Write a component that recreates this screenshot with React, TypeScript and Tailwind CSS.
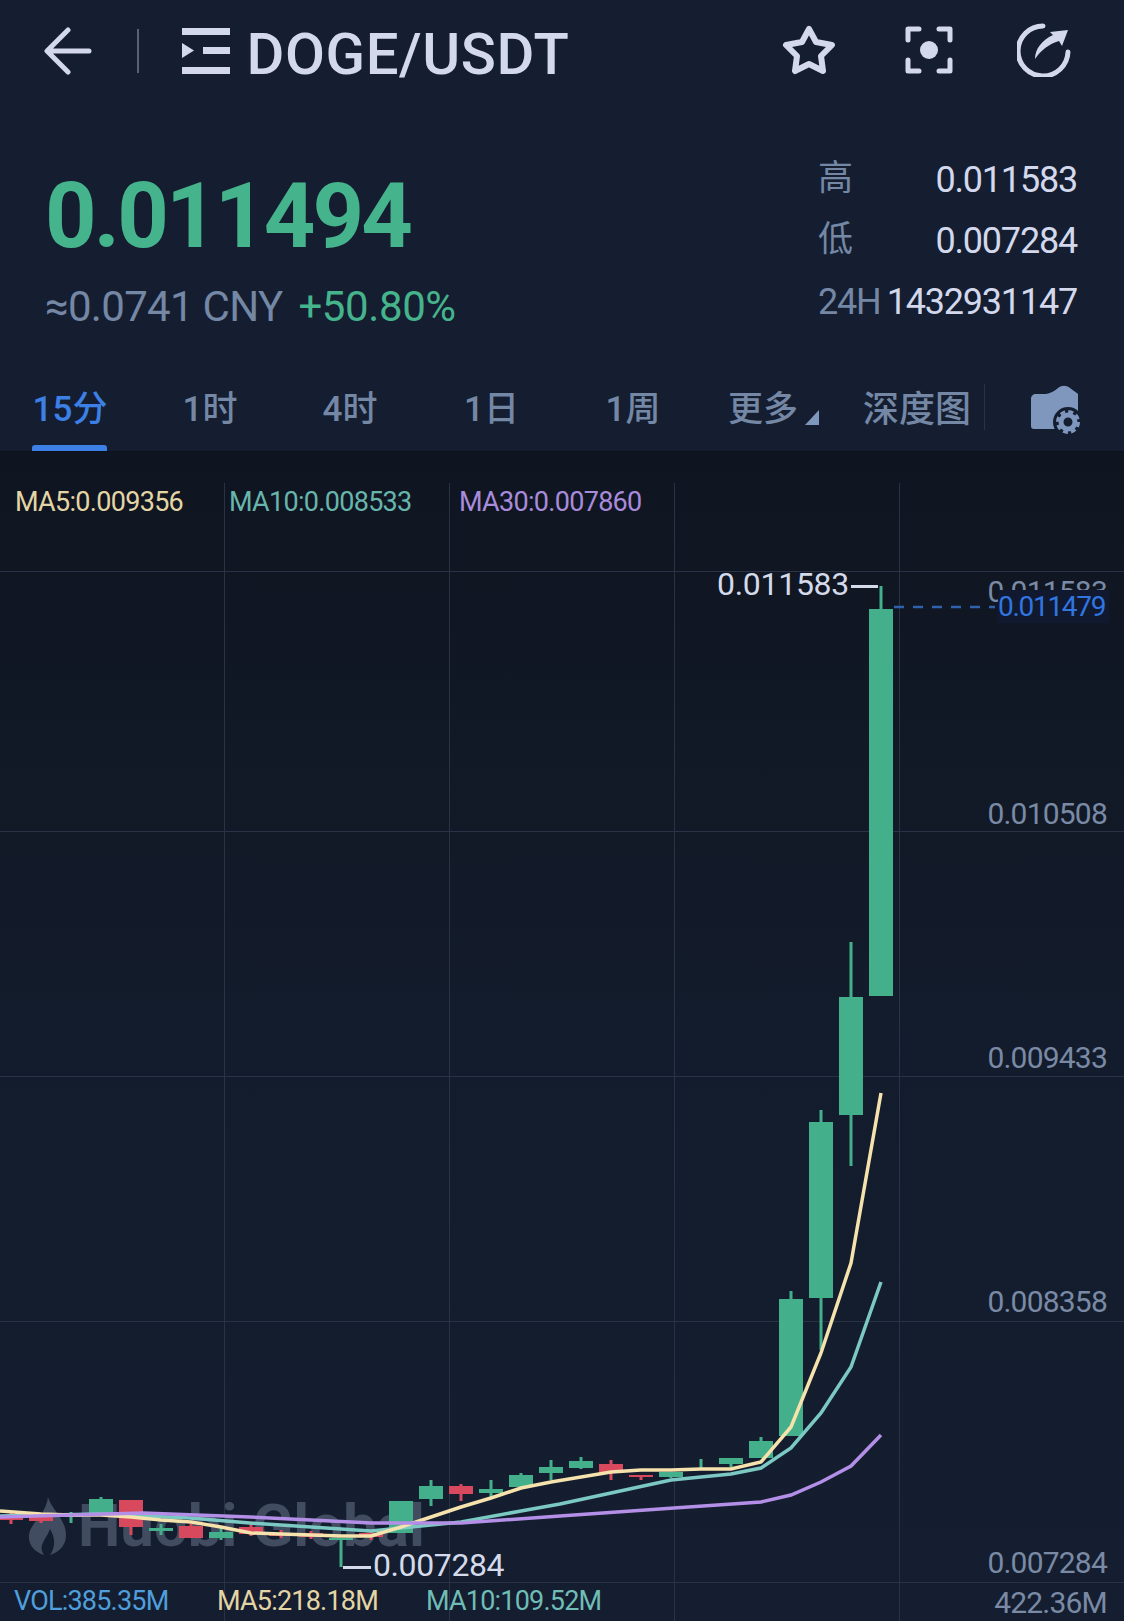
const FONT = '[font-family:Roboto,"Noto_Sans_CJK_SC",sans-serif]';

// x, wick top, body top, body bottom, wick bottom, colour (screen coordinates)
const candles: [number, number, number, number, number, 'g' | 'r'][] = [
  [11, 1513, 1515, 1520, 1524, 'r'],
  [41, 1513, 1515, 1521, 1523, 'r'],
  [71, 1512, 1514, 1517, 1523, 'g'],
  [101, 1497, 1499, 1513, 1515, 'g'],
  [131, 1500, 1500, 1527, 1535, 'r'],
  [161, 1524, 1528, 1531, 1535, 'g'],
  [191, 1524, 1526, 1538, 1538, 'r'],
  [221, 1528, 1532, 1538, 1540, 'g'],
  [251, 1523, 1527, 1534, 1536, 'r'],
  [281, 1530, 1533, 1536, 1538, 'r'],
  [311, 1531, 1533, 1537, 1539, 'r'],
  [341, 1538, 1538, 1540, 1567, 'g'],
  [371, 1530, 1533, 1537, 1540, 'r'],
  [401, 1501, 1501, 1533, 1533, 'g'],
  [431, 1480, 1486, 1499, 1506, 'g'],
  [461, 1484, 1486, 1494, 1501, 'r'],
  [491, 1480, 1489, 1493, 1498, 'g'],
  [521, 1473, 1475, 1487, 1488, 'g'],
  [551, 1460, 1467, 1473, 1480, 'g'],
  [581, 1457, 1461, 1468, 1469, 'g'],
  [611, 1460, 1464, 1473, 1480, 'r'],
  [641, 1475, 1475, 1477, 1480, 'r'],
  [671, 1472, 1472, 1477, 1478, 'g'],
  [701, 1459, 1468, 1470, 1470, 'g'],
  [731, 1458, 1458, 1464, 1467, 'g'],
  [761, 1437, 1441, 1458, 1458, 'g'],
  [791, 1291, 1299, 1436, 1436, 'g'],
  [821, 1110, 1122, 1298, 1350, 'g'],
  [851, 942, 997, 1115, 1166, 'g'],
  [881, 586, 609, 996, 996, 'g'],
];

const ma5 = '0,1511 41,1514 71,1515 101,1515 131,1517 161,1520 191,1522 221,1527 251,1533 281,1534 311,1535 341,1536 371,1536 401,1527 431,1517 461,1507 491,1498 521,1488 551,1482 581,1477 611,1472 641,1470 671,1470 701,1469 731,1469 761,1462 791,1427 821,1353 851,1263 881,1093';
const ma10 = '0,1516 50,1515 100,1514 190,1518 250,1523 311,1527 371,1531 401,1528 461,1522 521,1511 560,1504 611,1493 671,1480 731,1474 761,1468 791,1448 821,1413 851,1367 881,1282';
const ma30 = '0,1517 70,1515 143,1513 250,1517 311,1520 371,1523 461,1523 560,1516 674,1508 761,1502 791,1495 821,1482 851,1466 881,1435';

const tabs = [
  { label: '15分', cls: 'w-[140px] text-[#3c80e6]' },
  { label: '1时', cls: 'w-[140px]' },
  { label: '4时', cls: 'w-[140px]' },
  { label: '1日', cls: 'w-[143px]' },
  { label: '1周', cls: 'w-[140px]' },
];

function ChartDrawing() {
  return (
    <svg className="absolute inset-0" width="1124" height="1169" viewBox="0 452 1124 1169" fill="none">
      <g stroke="#2a3346" strokeWidth="1">
        {[224.5, 449.5, 674.5, 899.5].map((x) => (
          <line key={x} x1={x} x2={x} y1="483" y2="1621" />
        ))}
        {[571.5, 831.5, 1076.5, 1321.5, 1582.5].map((y) => (
          <line key={y} x1="0" x2="1124" y1={y} y2={y} />
        ))}
      </g>
      {candles.map(([x, wt, bt, bb, wb, c]) => {
        const color = c === 'g' ? '#44b08b' : '#d9495d';
        return (
          <g key={x} fill={color}>
            <rect x={x - 1.5} y={wt} width="3" height={wb - wt} />
            <rect x={x - 12} y={bt} width="24" height={bb - bt} />
          </g>
        );
      })}
      <polyline points={ma10} stroke="#7cc9c4" strokeWidth="3.5" />
      <polyline points={ma5} stroke="#f5e2ac" strokeWidth="3.5" />
      <polyline points={ma30} stroke="#b48fe8" strokeWidth="3.5" />
      <path d="M851 586.5H878M343 1567.5H371" stroke="#d5daea" strokeWidth="3" />
      <path d="M894 607H995" stroke="#2f62ad" strokeWidth="2.5" strokeDasharray="10 9" />
    </svg>
  );
}

function Flame() {
  return (
    <svg width="40" height="58" viewBox="0 0 40 58" fill="#414c60">
      <path d="M20 0C23 12 38 22 38 38C38 49 31 55 22 58C28 50 27 40 22 32C20 38 16 42 14 48C13 52 14 55 16 58C7 55 0 48 1 38C2 26 18 18 20 0Z" />
    </svg>
  );
}

function AxisLabel({ top, children }: { top: number; children: string }) {
  return (
    <div
      className="absolute right-[17px] text-[30px] leading-[36px] text-[#7a8aa5] tracking-[-0.8px]"
      style={{ top }}
    >
      {children}
    </div>
  );
}

export default function App() {
  return (
    <div className={`w-[1124px] h-[1621px] overflow-hidden bg-[#141e30] ${FONT}`}>
      {/* top bar */}
      <div className="h-[100px] relative flex items-center">
        <svg className="ml-[44px] mt-[2px]" width="48" height="48" viewBox="0 0 48 48" fill="none" stroke="#d3d8ec" strokeWidth="5" strokeLinecap="round" strokeLinejoin="round">
          <path d="M45 24H4M24 3L3 24L24 45" />
        </svg>
        <div className="ml-[45px] mt-[2px] w-[1.5px] h-[44px] bg-[#56627a]" />
        <svg className="ml-[43px] mt-[2px]" width="48" height="46" viewBox="0 0 48 46" fill="#d3d8ec">
          <rect x="0" y="0" width="48" height="7" />
          <rect x="21" y="19" width="27" height="7" />
          <rect x="0" y="39" width="48" height="7" />
          <path d="M0 15L12 22.5L0 30Z" />
        </svg>
        <span className="ml-[17px] mt-[8px] text-[58px] leading-none font-medium text-[#d3d8ec] tracking-[0.6px]">DOGE/USDT</span>
        <div className="ml-auto mr-[53px] flex items-center">
          <svg className="mr-[69px]" width="54" height="50" viewBox="0 0 54 50" fill="none" stroke="#d3d8ec" strokeWidth="6" strokeLinejoin="round">
            <path d="M27 4L34 17L50 20L39 31L41 46L27 39L13 46L15 31L4 20L20 17Z" />
          </svg>
          <svg className="mr-[64px]" width="48" height="48" viewBox="0 0 48 48" fill="none" stroke="#d3d8ec" strokeWidth="5" strokeLinecap="round" strokeLinejoin="round">
            <path d="M14 3H3V14M34 3H45V14M3 34V45H14M45 34V45H34" />
            <circle cx="24" cy="24" r="9" fill="#d3d8ec" stroke="none" />
          </svg>
          <svg width="54" height="54" viewBox="0 0 54 54" fill="none">
            <path d="M26 3A25 25 0 1 0 51 29" stroke="#d3d8ec" strokeWidth="5" strokeLinecap="round" />
            <path d="M18 36C18 26 25 17 36 12L33 9L51 7L45 23L42 18C32 21 24 27 18 36Z" fill="#d3d8ec" />
          </svg>
        </div>
      </div>

      {/* price block */}
      <div className="h-[268px] flex justify-between">
        <div className="pl-[45px]">
          <div className="mt-[72px] text-[90px] leading-none font-bold text-[#45b48c] tracking-[-2.8px]">0.011494</div>
          <div className="mt-[24px] flex items-center text-[42px] leading-none">
            <span className="text-[#7487a5] tracking-[-0.7px]">≈0.0741 CNY</span>
            <span className="ml-[16px] text-[#45b48c] tracking-[-0.4px]">+50.80%</span>
          </div>
        </div>
        <div className="mt-[49px] mr-[47px] w-[259px] text-[#d3d8ec] text-[36px] tracking-[-1.2px]">
          <div className="h-[61px] flex justify-between items-center">
            <span className="text-[#7487a5] text-[35px]">高</span>
            <span>0.011583</span>
          </div>
          <div className="h-[61px] flex justify-between items-center">
            <span className="text-[#7487a5] text-[35px]">低</span>
            <span>0.007284</span>
          </div>
          <div className="h-[61px] flex justify-between items-center">
            <span className="text-[#7487a5]">24H</span>
            <span>1432931147</span>
          </div>
        </div>
      </div>

      {/* interval tabs */}
      <div className="relative h-[84px] flex items-start border-b border-[#0c1119] text-[35px] leading-none text-[#7487a5] font-medium">
        {tabs.map((t) => (
          <div key={t.label} className={`h-[84px] text-center pt-[24px] ${t.cls}`}>
            {t.label}
          </div>
        ))}
        <div className="pl-[25px] pt-[24px] flex items-end">
          <span>更多</span>
          <svg className="ml-[6px] mb-[1px]" width="16" height="17" viewBox="0 0 16 17" fill="#7f96bd">
            <path d="M15 1V16H1Z" />
          </svg>
        </div>
        <div className="ml-[43px] pt-[24px] text-[36px]">深度图</div>
        <div className="ml-[13px] mt-[16px] w-[1px] h-[46px] bg-[#2a3346]" />
        <svg className="ml-[44px] mt-[17px]" width="52" height="52" viewBox="0 0 52 52">
          <path d="M2 14C2 11 4 9 7 9H14C20 9 24 7 29 3C33 0 37 0 41 3C45 6 47 7 49 9V44H5C3 44 2 43 2 41Z" fill="#7f96bd" />
          <circle cx="39" cy="37" r="15" fill="#141e30" />
          <circle cx="39" cy="37" r="7" fill="none" stroke="#7f96bd" strokeWidth="5" />
          <circle cx="39" cy="37" r="10.5" fill="none" stroke="#7f96bd" strokeWidth="3" strokeDasharray="5 3.25" />
        </svg>
        <div className="absolute left-[32px] bottom-0 w-[75px] h-[6px] rounded-t-[3px] bg-[#3c80e6]" />
      </div>

      {/* chart */}
      <div className="relative h-[1169px] bg-gradient-to-b from-[#0f1520] via-[#131c2c] to-[#141e30]">
        <div className="absolute left-[28px] top-[1044px] flex items-center gap-[10px] text-[#414c60]">
          <Flame />
          <span className="text-[60px] leading-none font-bold">Huobi Global</span>
        </div>
        <ChartDrawing />

        <div className="absolute left-[15px] top-[32px] flex text-[27px] leading-[36px] tracking-[-0.7px]">
          <span className="w-[214px] text-[#e4d5a5]">MA5:0.009356</span>
          <span className="w-[230px] text-[#67b5ad]">MA10:0.008533</span>
          <span className="text-[#a98bdc]">MA30:0.007860</span>
        </div>

        <AxisLabel top={122}>0.011583</AxisLabel>
        <div className="absolute left-[998px] top-[138px] w-[111px] h-[33px] bg-[#10192f] text-[#3175e0] text-[28px] leading-[33px] tracking-[-1.3px]">0.011479</div>
        <AxisLabel top={344}>0.010508</AxisLabel>
        <AxisLabel top={588}>0.009433</AxisLabel>
        <AxisLabel top={832}>0.008358</AxisLabel>
        <AxisLabel top={1093}>0.007284</AxisLabel>
        <AxisLabel top={1133}>422.36M</AxisLabel>

        <div className="absolute left-[717px] top-[113px] text-[32px] leading-[38px] text-[#d5daea] tracking-[-0.3px]">0.011583</div>
        <div className="absolute left-[373px] top-[1094px] text-[32px] leading-[38px] text-[#d5daea] tracking-[-0.4px]">0.007284</div>

        <div className="absolute left-[14px] top-[1131px] flex text-[27px] leading-[36px] tracking-[-0.8px]">
          <span className="w-[203px] text-[#4f9fdc]">VOL:385.35M</span>
          <span className="w-[209px] text-[#e4d5a5]">MA5:218.18M</span>
          <span className="text-[#6fbdb5]">MA10:109.52M</span>
        </div>
      </div>
    </div>
  );
}
